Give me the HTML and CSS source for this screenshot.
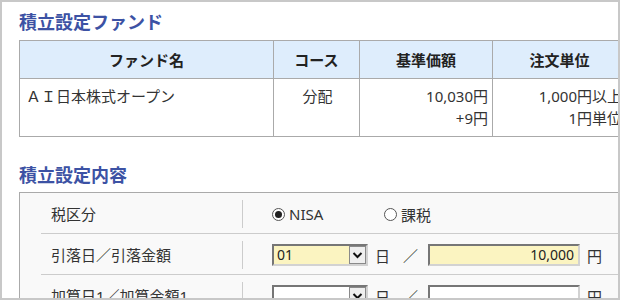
FILE: index.html
```html
<!DOCTYPE html>
<html lang="ja">

<head>
    <meta charset="utf-8" />
    <title>積立設定</title>
    <link rel="stylesheet" href="styles.css">
</head>

<body>
    <div class="frame">
        <div class="page">
            <h2 class="ttl">積立設定ファンド</h2>
            <table class="fund">
                <colgroup>
                    <col class="c1" />
                    <col class="c2" />
                    <col class="c3" />
                    <col class="c4" />
                </colgroup>
                <tr>
                    <th>ファンド名</th>
                    <th>コース</th>
                    <th>基準価額</th>
                    <th>注文単位</th>
                </tr>
                <tr>
                    <td>ＡＩ日本株式オープン</td>
                    <td class="center">分配</td>
                    <td class="right">10,030円<br />+9円</td>
                    <td class="right">1,000円以上<br />1円単位</td>
                </tr>
            </table>

            <h2 class="ttl ttl2">積立設定内容</h2>
            <div class="setbox">
                <div class="srow">
                    <div class="slabel">税区分</div>
                    <div class="sval">
                        <span class="radio first"><span class="dot on"></span>NISA</span>
                        <span class="radio"><span class="dot"></span>課税</span>
                    </div>
                </div>
                <div class="srow">
                    <div class="slabel">引落日／引落金額</div>
                    <div class="sval">
                        <span class="sel yellow"><span class="seltext">01</span><span class="selbtn"><svg width="11" height="8" viewBox="0 0 11 8"><path d="M1.5 2 L5.5 6 L9.5 2" fill="none" stroke="#111" stroke-width="2" /></svg></span></span>
                        <span class="unit">日</span>
                        <span class="slash">／</span>
                        <span class="amount yellow">10,000</span>
                        <span class="unit">円</span>
                    </div>
                </div>
                <div class="srow">
                    <div class="slabel">加算日1／加算金額1</div>
                    <div class="sval">
                        <span class="sel"><span class="seltext"></span><span class="selbtn"><svg width="11" height="8" viewBox="0 0 11 8"><path d="M1.5 2 L5.5 6 L9.5 2" fill="none" stroke="#111" stroke-width="2" /></svg></span></span>
                        <span class="unit">日</span>
                        <span class="slash">／</span>
                        <span class="amount"></span>
                        <span class="unit">円</span>
                    </div>
                </div>
            </div>
        </div>
    </div>
</body>

</html>
```

FILE: styles.css
```css
body {
    margin: 0;
    background: #fff;
    font: 15px "Noto Sans", "Noto Sans CJK JP", sans-serif;
    color: #333;
}

.frame {
    width: 620px;
    height: 300px;
    box-sizing: border-box;
    border: 2px solid #c8c8c8;
    overflow: hidden;
    background: #fff;
}

.page {
    width: 700px;
    padding: 9px 0 0 17px;
}

h2.ttl {
    margin: 0 0 6px 0;
    font-size: 18px;
    line-height: 23px;
    font-weight: bold;
    color: #3c52a4;
}

h2.ttl2 {
    margin-top: 27px;
    margin-bottom: 5px;
}

table.fund {
    border-collapse: collapse;
    table-layout: fixed;
    width: 607px;
    border: 1px solid #aaa;
}

col.c1 { width: 254px; }
col.c2 { width: 86px; }
col.c3 { width: 133px; }
col.c4 { width: 134px; }

table.fund th {
    background: #deedfc;
    border: 1px solid #aaa;
    height: 37px;
    padding: 0;
    font-weight: bold;
    color: #222;
    text-align: center;
    line-height: 20px;
}

table.fund td {
    border: 1px solid #aaa;
    padding: 6px 4px 7px 6px;
    line-height: 22px;
    vertical-align: top;
    white-space: nowrap;
}

td.center { text-align: center; }
td.right { text-align: right; }

.setbox {
    width: 680px;
    border: 1px solid #aaa;
    background: #f9f9f9;
    padding-left: 21px;
}

.srow {
    display: flex;
    border-bottom: 1px solid #ccc;
    padding: 7px 0 5px 0;
}

.slabel {
    width: 191px;
    padding-left: 10px;
    border-right: 1px solid #ccc;
    height: 28px;
    line-height: 28px;
    white-space: nowrap;
}

.sval {
    display: flex;
    align-items: center;
    padding-left: 29px;
    height: 28px;
    white-space: nowrap;
}

.radio {
    display: inline-flex;
    align-items: center;
}

.radio.first {
    width: 112px;
}

.dot {
    width: 11px;
    height: 11px;
    border: 1px solid #555;
    border-radius: 50%;
    background: #fff;
    margin-right: 4px;
    position: relative;
}

.dot.on::after {
    content: "";
    position: absolute;
    left: 2px;
    top: 2px;
    width: 7px;
    height: 7px;
    border-radius: 50%;
    background: #222;
}

.sel {
    display: inline-flex;
    width: 96px;
    height: 22px;
    box-sizing: border-box;
    border: 2px solid;
    border-color: #767676 #d2d2d2 #d2d2d2 #767676;
    background: #fff;
}

.yellow {
    background: #fbf4c1;
}

.seltext {
    flex: 1;
    padding-left: 3px;
    line-height: 18px;
    font-size: 14px;
    color: #222;
}

.selbtn {
    width: 17px;
    box-sizing: border-box;
    border: 1px solid #8a8a8a;
    background: #efefef;
    display: flex;
    align-items: center;
    justify-content: center;
}

.unit {
    margin-left: 7px;
}

.slash {
    margin-left: 13px;
    margin-right: 10px;
}

.amount {
    display: inline-block;
    width: 152px;
    height: 22px;
    box-sizing: border-box;
    border: 2px solid;
    border-color: #767676 #d2d2d2 #d2d2d2 #767676;
    background: #fff;
    text-align: right;
    padding-right: 4px;
    line-height: 18px;
    font-size: 14px;
    color: #222;
}

.amount.yellow {
    background: #fbf4c1;
}
```
